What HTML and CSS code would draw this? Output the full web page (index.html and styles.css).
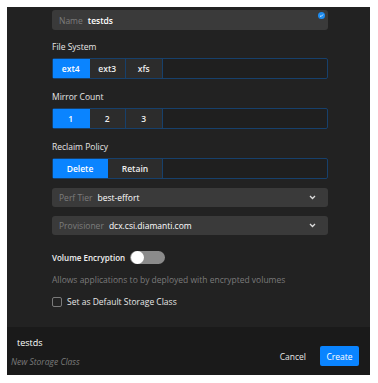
FILE: index.html
```html
<!DOCTYPE html>
<html lang="en">
<head>
  <meta charset="UTF-8" />
  <title>New Storage Class</title>
  <link rel="stylesheet" href="styles.css">
</head>
<body>
  <div class="panel">
    <div class="form">
      <div class="text-field">
        <span class="field-label">Name</span>
        <span class="field-value">testds</span>
        <span class="valid-dot">
          <svg width="7" height="7" viewBox="0 0 7 7"><circle cx="3.5" cy="3.5" r="3.5" fill="#1e8cf0"/><path d="M2 3.7 L3 4.6 L5 2.5" stroke="#fff" stroke-width="0.8" fill="none"/></svg>
        </span>
      </div>

      <div class="group">
        <div class="group-label">File System</div>
        <div class="segmented">
          <button class="seg active">ext4</button>
          <button class="seg">ext3</button>
          <button class="seg">xfs</button>
        </div>
      </div>

      <div class="group">
        <div class="group-label">Mirror Count</div>
        <div class="segmented">
          <button class="seg active">1</button>
          <button class="seg">2</button>
          <button class="seg">3</button>
        </div>
      </div>

      <div class="group">
        <div class="group-label">Reclaim Policy</div>
        <div class="segmented">
          <button class="seg wide active">Delete</button>
          <button class="seg wide">Retain</button>
        </div>
      </div>

      <div class="select first">
        <span class="field-label">Perf Tier</span>
        <span class="field-value">best-effort</span>
        <svg class="chevron" width="7" height="5" viewBox="0 0 7 5"><path d="M1 1 L3.5 3.5 L6 1" stroke="#ddd" stroke-width="1.3" fill="none"/></svg>
      </div>
      <div class="select">
        <span class="field-label">Provisioner</span>
        <span class="field-value">dcx.csi.diamanti.com</span>
        <svg class="chevron" width="7" height="5" viewBox="0 0 7 5"><path d="M1 1 L3.5 3.5 L6 1" stroke="#ddd" stroke-width="1.3" fill="none"/></svg>
      </div>

      <div class="toggle-row">
        <span class="toggle-label">Volume Encryption</span>
        <span class="toggle"><span class="knob"></span></span>
      </div>
      <div class="helper">Allows applications to by deployed with encrypted volumes</div>

      <label class="check-row">
        <span class="checkbox"></span>
        <span>Set as Default Storage Class</span>
      </label>
    </div>

    <div class="footer">
      <div class="footer-title">
        <div class="title">testds</div>
        <div class="subtitle">New Storage Class</div>
      </div>
      <div class="actions">
        <button class="btn-cancel">Cancel</button>
        <button class="btn-create">Create</button>
      </div>
    </div>
  </div>
</body>
</html>
```

FILE: styles.css
```css
* {
  margin: 0;
  padding: 0;
  box-sizing: border-box;
  font-family: "Open Sans", "Noto Sans", Arial, sans-serif;
}
body {
  background-color: #ffffff;
  padding: 7px;
}
.panel {
  width: 363px;
  height: 368px;
  background-color: #222222;
  display: flex;
  flex-direction: column;
  overflow: hidden;
}
.form {
  flex: 1;
  padding: 3px 42px 0 45px;
}
.text-field, .select {
  height: 20px;
  background-color: #3a3a3a;
  border-radius: 3px;
  display: flex;
  align-items: center;
  padding: 0 7px;
  font-size: 8.5px;
  position: relative;
}
.field-label {
  color: #7c7c7c;
  margin-right: 5px;
}
.field-value {
  color: #ffffff;
}
.text-field .field-value {
  font-weight: 600;
}
.valid-dot {
  position: absolute;
  top: 2px;
  right: 3px;
  line-height: 0;
}
.group {
  margin-top: 10px;
}
.group + .group {
  margin-top: 11px;
}
.group-label {
  color: #e6e6e6;
  font-size: 8.5px;
  line-height: 14px;
  margin-bottom: 4px;
}
.segmented {
  height: 21px;
  border: 1px solid #17406b;
  border-radius: 2px;
  display: flex;
  background-color: #1f1f1f;
}
.seg {
  width: 36.5px;
  border: none;
  border-right: 1px solid #17406b;
  background-color: #2c2c2c;
  color: #eeeeee;
  font-size: 8.5px;
  font-weight: 600;
}
.seg.wide {
  width: 55px;
}
.seg.active {
  background-color: #0a84ff;
  color: #ffffff;
  border-right-color: #0a84ff;
}
.select {
  height: 19px;
  margin-top: 9px;
}
.chevron {
  margin-left: auto;
  margin-right: 5px;
}
.toggle-row {
  display: flex;
  align-items: center;
  margin-top: 15px;
  height: 14px;
}
.toggle-label {
  color: #f0f0f0;
  font-size: 8px;
  font-weight: 600;
  margin-right: 5px;
}
.toggle {
  width: 35px;
  height: 13px;
  border-radius: 7px;
  background-color: #8b8b8b;
  position: relative;
}
.knob {
  position: absolute;
  left: 1px;
  top: 0;
  width: 13px;
  height: 13px;
  border-radius: 50%;
  background-color: #ffffff;
}
.helper {
  color: #7a7a7a;
  font-size: 8.5px;
  line-height: 14px;
  margin-top: 9px;
}
.check-row {
  display: flex;
  align-items: center;
  margin-top: 9px;
  color: #e6e6e6;
  font-size: 8.5px;
}
.checkbox {
  width: 10px;
  height: 10px;
  border: 1px solid #7a7a7a;
  border-radius: 2px;
  margin-right: 5px;
}
.footer {
  height: 48px;
  background-color: #1a1a1a;
  display: flex;
  align-items: center;
  justify-content: space-between;
  padding: 0 11px 0 4px;
}
.title {
  color: #ffffff;
  font-size: 9px;
  padding-left: 6px;
  margin-bottom: 7px;
}
.subtitle {
  color: #7a7a7a;
  font-size: 8.5px;
  font-style: italic;
}
.actions {
  display: flex;
  align-items: center;
  padding-top: 10px;
}
.btn-cancel {
  background: none;
  border: none;
  color: #e6e6e6;
  font-size: 8.5px;
  margin-right: 14px;
}
.btn-create {
  background-color: #0a84ff;
  border: none;
  border-radius: 2px;
  color: #ffffff;
  font-size: 8.5px;
  width: 39px;
  height: 20px;
}
```
